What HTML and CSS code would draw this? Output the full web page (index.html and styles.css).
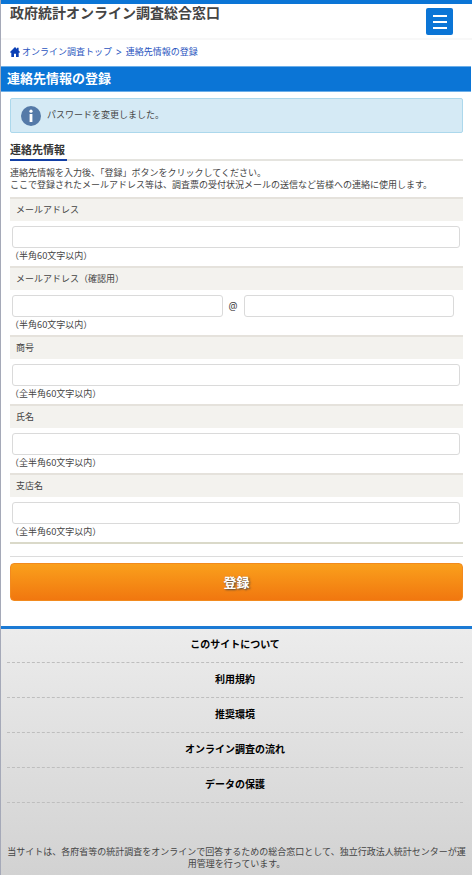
FILE: index.html
```
<!DOCTYPE html>
<html lang="ja">
<head>
    <meta charset="UTF-8">
    <meta name="viewport" content="width=device-width, initial-scale=1.0">
    <title>連絡先情報の登録 - 政府統計オンライン調査総合窓口</title>
    <link rel="stylesheet" href="styles.css">
</head>
<body>
    <header class="site-header">
        <h1 class="site-title">政府統計オンライン調査総合窓口</h1>
        <button type="button" class="menu-btn" aria-label="メニュー">
            <span></span>
            <span></span>
            <span></span>
        </button>
    </header>

    <nav class="breadcrumb">
        <svg class="home-icon" viewBox="0 0 10 10" aria-hidden="true">
            <path d="M5 0 L7 1.9 V0.8 H8.6 V3.4 L10 5 L9.4 5.7 H8.7 V10 H6 V6.8 H4 V10 H1.3 V5.7 H0.6 L0 5 Z" fill="#0a3fb5"/>
        </svg>
        <a href="#">オンライン調査トップ</a>
        <span class="sep">&gt;</span>
        <a href="#">連絡先情報の登録</a>
    </nav>

    <h2 class="page-title">連絡先情報の登録</h2>

    <main class="content">
        <div class="info">
            <svg class="info-icon" viewBox="0 0 20 20" aria-hidden="true">
                <circle cx="10" cy="10" r="10" fill="#557aa8"/>
                <circle cx="10" cy="5.2" r="1.6" fill="#fff"/>
                <path d="M8.6 8 H11.4 V16 H8.6 Z" fill="#fff"/>
            </svg>
            <p>パスワードを変更しました。</p>
        </div>

        <h3 class="section-title"><span>連絡先情報</span></h3>
        <p class="lead">連絡先情報を入力後、「登録」ボタンをクリックしてください。<br>ここで登録されたメールアドレス等は、調査票の受付状況メールの送信など皆様への連絡に使用します。</p>

        <form>
            <div class="fields">
                <div class="field">
                    <label for="email">メールアドレス</label>
                    <div class="inputs"><input type="text" id="email"></div>
                    <p class="note">（半角60文字以内）</p>
                </div>
                <div class="field">
                    <label for="emailLocal">メールアドレス（確認用）</label>
                    <div class="inputs split">
                        <input type="text" id="emailLocal">
                        <span class="at">@</span>
                        <input type="text" id="emailDomain" aria-label="メールアドレス（確認用）ドメイン">
                    </div>
                    <p class="note">（半角60文字以内）</p>
                </div>
                <div class="field">
                    <label for="company">商号</label>
                    <div class="inputs"><input type="text" id="company"></div>
                    <p class="note">（全半角60文字以内）</p>
                </div>
                <div class="field">
                    <label for="fullName">氏名</label>
                    <div class="inputs"><input type="text" id="fullName"></div>
                    <p class="note">（全半角60文字以内）</p>
                </div>
                <div class="field">
                    <label for="branch">支店名</label>
                    <div class="inputs"><input type="text" id="branch"></div>
                    <p class="note">（全半角60文字以内）</p>
                </div>
            </div>

            <div class="actions">
                <button type="button" class="submit-btn">登録</button>
            </div>
        </form>
    </main>

    <footer class="site-footer">
        <ul>
            <li><a href="#">このサイトについて</a></li>
            <li><a href="#">利用規約</a></li>
            <li><a href="#">推奨環境</a></li>
            <li><a href="#">オンライン調査の流れ</a></li>
            <li><a href="#">データの保護</a></li>
        </ul>
        <p>当サイトは、各府省等の統計調査をオンラインで回答するための総合窓口として、独立行政法人統計センターが運用管理を行っています。</p>
    </footer>
</body>
</html>
```
FILE: styles.css
```
* {
    box-sizing: border-box;
}
body {
    margin: 0;
    border-left: 1px solid #a5a9b8;
    background: #fff;
    color: #444;
    font-family: "Noto Sans", "Noto Sans CJK JP", sans-serif;
    font-size: 9px;
    line-height: 12px;
}
h1, h2, h3, p, ul {
    margin: 0;
    padding: 0;
}
.site-header {
    display: flex;
    justify-content: space-between;
    align-items: flex-start;
    height: 40px;
    padding: 4px 19px 0 9px;
    border-top: 4px solid #0b75d6;
    border-bottom: 2px solid #f8f8f8;
}
.site-title {
    margin-top: -4px;
    color: #444;
    font-size: 14px;
    line-height: 18px;
}
.menu-btn {
    display: flex;
    flex-direction: column;
    justify-content: center;
    gap: 4px;
    width: 27px;
    height: 27px;
    padding: 0 6px 0 7px;
    border: none;
    border-radius: 2px;
    background: #0b75d6;
    cursor: pointer;
}
.menu-btn span {
    height: 2px;
    background: #fff;
}
.breadcrumb {
    display: flex;
    align-items: center;
    height: 26px;
    padding: 0 9px 2px;
}
.breadcrumb a {
    color: #2a55c0;
    text-decoration: none;
}
.breadcrumb a:hover {
    text-decoration: underline;
}
.breadcrumb .sep {
    margin: 0 4px;
    color: #2a55c0;
    font-size: 10px;
}
.home-icon {
    width: 10px;
    height: 10px;
    margin-right: 2px;
}
.page-title {
    margin-right: 1px;
    padding: 0 6px 2px;
    border-top: 1px solid #6caee8;
    border-bottom: 1px solid #6caee8;
    background: #0b75d6;
    color: #fff;
    font-size: 13px;
    line-height: 22px;
}
.content {
    padding: 6px 9px 25px;
}
.info {
    display: flex;
    align-items: center;
    gap: 6px;
    height: 35px;
    padding: 0 10px;
    border: 1px solid #acd8ec;
    border-radius: 2px;
    background: #d5eaf5;
}
.info-icon {
    width: 20px;
    height: 20px;
}
.info p {
    padding-bottom: 2px;
}
.section-title {
    margin-top: 8px;
    border-bottom: 2px solid #e5e4df;
    color: #333;
    font-size: 11px;
    line-height: 18px;
}
.section-title span {
    display: inline-block;
    margin-bottom: -2px;
    padding-right: 2px;
    border-bottom: 2px solid #123fa5;
}
.lead {
    margin: 6px 0;
}
.fields {
    border-bottom: 2px solid #dad9c9;
}
.field {
    border-top: 2px solid #e5e2dc;
}
.field label {
    display: block;
    padding: 0 6px;
    background: #f3f2ee;
    line-height: 22px;
}
.inputs {
    display: flex;
    align-items: center;
    padding: 5px 3px 0 2px;
}
.inputs.split {
    padding-right: 9px;
}
.inputs input {
    flex: 1;
    min-width: 0;
    height: 22px;
    padding: 0 4px;
    border: 1px solid #dadada;
    border-radius: 3px;
    background: #fff;
    color: #444;
    font: inherit;
}
.at {
    width: 21px;
    font-size: 10px;
    text-align: center;
}
.note {
    padding-bottom: 2px;
    line-height: 16px;
}
.actions {
    margin-top: 12px;
    padding-top: 6px;
    border-top: 1px solid #dcdcdc;
}
.submit-btn {
    display: block;
    width: 100%;
    height: 38px;
    padding: 0 0 2px;
    border: 1px solid #f28a1e;
    border-radius: 4px;
    background: linear-gradient(#faa01c, #f1770f);
    color: #fff;
    font-family: inherit;
    font-size: 13px;
    font-weight: bold;
    text-shadow: 1px 1px 2px #444;
    cursor: pointer;
}
.site-footer {
    padding: 0 5px 5px;
    border-top: 3px solid #1b7ad4;
    background: linear-gradient(#ececec, #d2d2d2);
    text-align: center;
}
.site-footer ul {
    margin: -1px 4px 0 1px;
    list-style: none;
}
.site-footer li {
    padding-bottom: 1px;
    border-bottom: 1px dashed #bebebe;
}
.site-footer a {
    display: block;
    color: #000;
    font-size: 10px;
    font-weight: bold;
    line-height: 33px;
    text-decoration: none;
}
.site-footer p {
    margin-top: 43px;
}
```
